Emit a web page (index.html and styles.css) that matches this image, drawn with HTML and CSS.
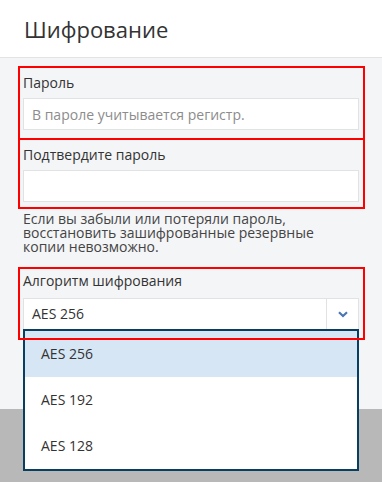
FILE: index.html
```html
<!DOCTYPE html>
<html lang="ru">
<head>
    <meta charset="UTF-8">
    <meta name="viewport" content="width=device-width, initial-scale=1.0">
    <title>Шифрование</title>
    <link rel="stylesheet" href="styles.css">
</head>
<body>

    <div class="screen">
        <div class="panel">
            <div class="panel-header">Шифрование</div>

            <form class="panel-form">
                <div class="field field-first">
                    <label for="password">Пароль</label>
                    <input type="password" id="password" placeholder="В пароле учитывается регистр.">
                </div>

                <div class="field field-second">
                    <label for="confirm">Подтвердите пароль</label>
                    <input type="password" id="confirm">
                </div>

                <p class="hint">Если вы забыли или потеряли пароль, восстановить зашифрованные резервные копии невозможно.</p>

                <div class="field field-third">
                    <label>Алгоритм шифрования</label>
                    <div class="select">
                        <span class="select-value">AES 256</span>
                        <span class="select-btn">
                            <svg width="10" height="7" viewBox="0 0 10 7">
                                <path d="M1 1.2 L5 5 L9 1.2" fill="none" stroke="#4a76b3" stroke-width="2.2"/>
                            </svg>
                        </span>
                        <ul class="select-menu">
                            <li class="active">AES 256</li>
                            <li>AES 192</li>
                            <li>AES 128</li>
                        </ul>
                    </div>
                </div>
            </form>
        </div>
        <div class="backdrop"></div>
    </div>

</body>
</html>
```

FILE: styles.css
```css
body {
    margin: 0;
    background-color: #b8b8b8;
    font-family: "Open Sans", sans-serif;
    color: #333;
}

.screen {
    height: 482px;
    display: flex;
    flex-direction: column;
}

.panel {
    position: relative;
    z-index: 1;
    height: 409px;
    flex: none;
    background-color: #f4f5f7;
}

.backdrop {
    flex: 1;
    background-color: #b8b8b8;
}

.panel-header {
    height: 57px;
    display: flex;
    align-items: center;
    padding-left: 24px;
    background-color: #fff;
    border-bottom: 1px solid #e2e3e5;
    font-size: 22px;
    color: #333;
}

.panel-form {
    padding: 8px 17px 0 18px;
    margin: 0;
}

/* red frames are drawn above the dropdown */
.field {
    position: relative;
    padding: 7px 6px 10px 5px;
}

.field::after {
    content: "";
    position: absolute;
    top: 0;
    left: 0;
    right: 0;
    bottom: 0;
    border: 2px solid #ff0000;
    z-index: 3;
    pointer-events: none;
}

.field label {
    display: block;
    font-size: 14px;
    line-height: 20px;
    margin-bottom: 5px;
}

.field-second {
    margin-top: -2px;
    padding-bottom: 7px;
}

.field-third {
    margin-top: 13px;
    padding-top: 4px;
}

.field-third label {
    margin-bottom: 7px;
}

input[type="password"] {
    display: block;
    width: 100%;
    height: 32px;
    box-sizing: border-box;
    padding: 0 8px;
    border: 1px solid #e1e2e4;
    background-color: #fff;
    font-family: "Open Sans", sans-serif;
    font-size: 14px;
    outline: none;
}

input::placeholder {
    color: #8c8c8c;
}

.hint {
    margin: 3px 0 0 5px;
    max-width: 305px;
    font-size: 14px;
    line-height: 14px;
    color: #444;
}

.select {
    position: relative;
    display: flex;
    height: 32px;
    box-sizing: border-box;
    border: 1px solid #e1e2e4;
    background-color: #fff;
    font-size: 14px;
}

.select-value {
    flex: 1;
    padding-left: 8px;
    line-height: 30px;
}

.select-btn {
    width: 31px;
    display: flex;
    align-items: center;
    justify-content: center;
    border-left: 1px solid #e1e2e4;
}

.select-menu {
    position: absolute;
    top: 100%;
    left: -1px;
    right: -1px;
    margin: 0;
    padding: 0;
    list-style: none;
    background-color: #fff;
    border: 2px solid #083e5f;
    z-index: 2;
}

.select-menu li {
    height: 46px;
    line-height: 46px;
    padding-left: 16px;
    font-size: 14px;
    color: #333;
}

.select-menu li.active {
    background-color: #d6e6f4;
}
```
